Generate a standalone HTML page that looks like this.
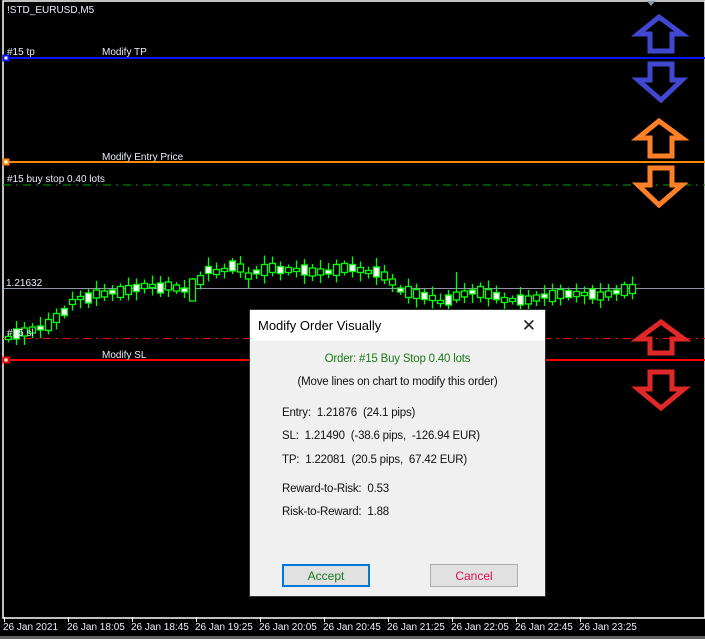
<!DOCTYPE html>
<html><head><meta charset="utf-8"><style>
html,body{margin:0;padding:0;background:#000;width:705px;height:639px;overflow:hidden;font-family:"Liberation Sans",sans-serif}
.t{position:absolute;color:#e8eef8;font-size:10px;white-space:nowrap}
#dlg{position:absolute;left:249px;top:309px;width:297px;height:288px;background:#f0f0f0;border:1px solid #333;box-sizing:border-box}
#dlg .title{height:31px;background:#fff;font-size:13px;color:#000;line-height:31px;padding-left:8px;position:relative}
#dlg .x{position:absolute;right:9px;top:0;font-size:17px;font-weight:300;color:#222}
.d{position:absolute;font-size:11.5px;letter-spacing:-0.2px;color:#111;white-space:nowrap}
.btn{position:absolute;top:564px;width:88px;height:23px;box-sizing:border-box;font-size:12px;text-align:center;line-height:20px}
</style></head><body>
<svg width="705" height="639" style="position:absolute;left:0;top:0">
<rect x="3" y="1" width="702" height="617" fill="none" stroke="#fff" stroke-width="1.5"/>
<polygon points="647,1 655,1 651,6" fill="#8899aa"/>
<line x1="3" y1="288.5" x2="705" y2="288.5" stroke="#8a96a6" stroke-width="1"/>
<line x1="3" y1="58" x2="705" y2="58" stroke="#0a14ff" stroke-width="2"/>
<line x1="3" y1="162" x2="705" y2="162" stroke="#ff8a00" stroke-width="2"/>
<line x1="3" y1="185" x2="705" y2="185" stroke="#00a000" stroke-width="1" stroke-dasharray="8,5,2,5"/>
<line x1="3" y1="338.5" x2="705" y2="338.5" stroke="#ff0000" stroke-width="1" stroke-dasharray="8,5,2,5"/>
<line x1="3" y1="360" x2="705" y2="360" stroke="#ff0000" stroke-width="2"/>
<rect x="3.5" y="55.5" width="5" height="5" fill="#fff" stroke="#0a14ff" stroke-width="2"/>
<rect x="3.5" y="159.5" width="5" height="5" fill="#fff" stroke="#ff8a00" stroke-width="2"/>
<rect x="3.5" y="357.5" width="5" height="5" fill="#fff" stroke="#ff0000" stroke-width="2"/>
<g id="c" stroke="#00ff00" stroke-width="1.3"></g>
<g fill="none" stroke-width="5" stroke-linejoin="miter">
<polygon points="659,17 638,34 650,34 650,51 672,51 672,34 682,34" stroke="#4048d0"/>
<polygon points="650,64 672,64 672,80 682,80 661,100 638,80 650,80" stroke="#4048d0"/>
<polygon points="659,121 638,138 650,138 650,156 672,156 672,138 682,138" stroke="#ff8028"/>
<polygon points="650,168 672,168 672,185 682,185 659,205 638,185 650,185" stroke="#ff8028"/>
<polygon points="661,322 638,339 650,339 650,353 672,353 672,339 684,339" stroke="#e02828"/>
<polygon points="650,372 672,372 672,389 684,389 661,408 638,389 650,389" stroke="#e02828"/>
</g>
<g stroke="#fff" stroke-width="1">
<line x1="4.5" y1="617" x2="4.5" y2="622"/><line x1="68.5" y1="617" x2="68.5" y2="622"/><line x1="132.5" y1="617" x2="132.5" y2="622"/><line x1="196.5" y1="617" x2="196.5" y2="622"/><line x1="260.5" y1="617" x2="260.5" y2="622"/><line x1="324.5" y1="617" x2="324.5" y2="622"/><line x1="388.5" y1="617" x2="388.5" y2="622"/><line x1="452.5" y1="617" x2="452.5" y2="622"/><line x1="516.5" y1="617" x2="516.5" y2="622"/><line x1="580.5" y1="617" x2="580.5" y2="622"/>
</g>
<rect x="0" y="636" width="705" height="3" fill="#606060"/>
</svg>
<div class="t" style="left:7px;top:5px">!STD_EURUSD,M5</div>
<div class="t" style="left:7px;top:47px">#15 tp</div>
<div class="t" style="left:102px;top:47px">Modify TP</div>
<div class="t" style="left:102px;top:152px">Modify Entry Price</div>
<div class="t" style="left:7px;top:174px">#15 buy stop 0.40 lots</div>
<div class="t" style="left:6px;top:278px">1.21632</div>
<div class="t" style="left:7px;top:328px">#15 sl</div>
<div class="t" style="left:102px;top:350px">Modify SL</div>
<div class="t" style="left:3px;top:622px">26 Jan 2021</div>
<div class="t" style="left:67px;top:622px">26 Jan 18:05</div>
<div class="t" style="left:131px;top:622px">26 Jan 18:45</div>
<div class="t" style="left:195px;top:622px">26 Jan 19:25</div>
<div class="t" style="left:259px;top:622px">26 Jan 20:05</div>
<div class="t" style="left:323px;top:622px">26 Jan 20:45</div>
<div class="t" style="left:387px;top:622px">26 Jan 21:25</div>
<div class="t" style="left:451px;top:622px">26 Jan 22:05</div>
<div class="t" style="left:515px;top:622px">26 Jan 22:45</div>
<div class="t" style="left:579px;top:622px">26 Jan 23:25</div>
<div id="dlg"><div class="title">Modify Order Visually<span class="x">✕</span></div></div>
<div class="d" style="left:249px;width:297px;text-align:center;top:353px;color:#1a7a1a">Order: #15 Buy Stop 0.40 lots</div>
<div class="d" style="left:249px;width:297px;text-align:center;top:376px">(Move lines on chart to modify this order)</div>
<div class="d" style="left:282px;top:407px">Entry:&nbsp; 1.21876&nbsp; (24.1 pips)</div>
<div class="d" style="left:282px;top:430px">SL:&nbsp; 1.21490&nbsp; (-38.6 pips,&nbsp; -126.94 EUR)</div>
<div class="d" style="left:282px;top:454px">TP:&nbsp; 1.22081&nbsp; (20.5 pips,&nbsp; 67.42 EUR)</div>
<div class="d" style="left:282px;top:483px">Reward-to-Risk:&nbsp; 0.53</div>
<div class="d" style="left:282px;top:506px">Risk-to-Reward:&nbsp; 1.88</div>
<div class="btn" style="left:282px;border:2px solid #0078d7;background:#e1e1e1;color:#1a7a1a">Accept</div>
<div class="btn" style="left:430px;border:1px solid #adadad;background:#e1e1e1;color:#e0104e;line-height:22px">Cancel</div>
<script>
var ys=[338,334,332,330,328,325,318,312,302,298,298,294,294,292,292,290,288,286,286,288,286,288,290,284,280,270,272,270,266,268,276,272,270,268,270,270,270,270,272,272,272,270,268,268,270,272,272,276,282,290,292,294,296,298,302,300,296,294,292,292,294,296,300,300,300,300,298,296,296,294,294,294,294,294,296,294,292,290,289];
var g=document.getElementById('c'),s='';
for(var i=0;i<ys.length;i++){var x=8+i*8,y=ys[i],h=3+((i*7)%9),up=(i%3)!=1;var wt=y-h/2-3-((i*5)%7),wb=y+h/2+3+((i*3)%7);
if(i==23){h=22;y=290;wt=278;wb=300;}if(i==56){wt=272;}
s+='<line x1="'+(x+0.5)+'" y1="'+wt+'" x2="'+(x+0.5)+'" y2="'+wb+'"/>';
s+='<rect x="'+(x-2.5)+'" y="'+(y-h/2)+'" width="6" height="'+h+'" fill="'+(up?'#000':'#fff')+'"/>';}
g.innerHTML=s;
</script>
</body></html>
